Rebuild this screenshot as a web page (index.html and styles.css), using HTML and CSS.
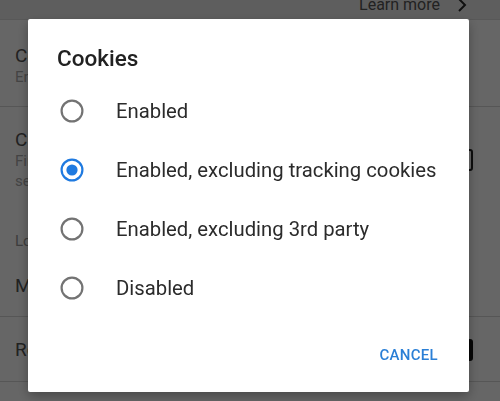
FILE: index.html
```html
<!DOCTYPE html>
<html>
<head>
<meta charset="utf-8">
<link rel="stylesheet" href="styles.css">
</head>
<body>
<div class="page">
  <div class="top-row">
    <span class="learn">Learn more</span>
    <svg class="chev" width="12" height="14" viewBox="0 0 12 14"><path d="M3 1 L9 7 L3 13" fill="none" stroke="#2a2a2a" stroke-width="2"/></svg>
  </div>
  <div class="row r1">
    <div class="row-text">
      <div class="row-title">Cookies</div>
      <div class="row-sub">Enabled, excluding tracking cookies</div>
    </div>
  </div>
  <div class="row r2">
    <div class="row-text">
      <div class="row-title">Cryptominers</div>
      <div class="row-sub">First-party and third-party trackers that<br>send data about you</div>
    </div>
    <span class="check"></span>
  </div>
  <div class="section">Logins and passwords</div>
  <div class="row r3">
    <div class="row-text"><div class="row-title">Manage logins</div></div>
  </div>
  <div class="row r4">
    <div class="row-text"><div class="row-title">Remember passwords</div></div>
    <span class="check on"></span>
  </div>
</div>

<div class="scrim">
  <div class="dialog">
    <div class="dlg-title">Cookies</div>
    <div class="options">
      <div class="option">
        <svg class="radio" width="24" height="24" viewBox="0 0 24 24"><circle cx="12" cy="12" r="10.4" fill="none" stroke="#737373" stroke-width="2.2"/></svg>
        <span class="opt-label">Enabled</span>
      </div>
      <div class="option">
        <svg class="radio" width="24" height="24" viewBox="0 0 24 24"><circle cx="12" cy="12" r="10.4" fill="none" stroke="#1f7ae0" stroke-width="2.2"/><circle cx="12" cy="12" r="5.6" fill="#1f7ae0"/></svg>
        <span class="opt-label">Enabled, excluding tracking cookies</span>
      </div>
      <div class="option">
        <svg class="radio" width="24" height="24" viewBox="0 0 24 24"><circle cx="12" cy="12" r="10.4" fill="none" stroke="#737373" stroke-width="2.2"/></svg>
        <span class="opt-label">Enabled, excluding 3rd party</span>
      </div>
      <div class="option">
        <svg class="radio" width="24" height="24" viewBox="0 0 24 24"><circle cx="12" cy="12" r="10.4" fill="none" stroke="#737373" stroke-width="2.2"/></svg>
        <span class="opt-label">Disabled</span>
      </div>
    </div>
    <div class="actions">
      <span class="btn">CANCEL</span>
    </div>
  </div>
</div>
</body>
</html>
```
FILE: styles.css
```css
* { box-sizing: border-box; }
html, body { margin: 0; padding: 0; }
body {
  width: 500px;
  height: 401px;
  overflow: hidden;
  font-family: Roboto, "Noto Sans", sans-serif;
  background: #ffffff;
}
.page {
  width: 500px;
  height: 401px;
  background: #ffffff;
  overflow: hidden;
}
.top-row {
  height: 20px;
  background: #ececec;
  border-bottom: 1px solid #dcdcdc;
  display: flex;
  justify-content: flex-end;
  align-items: flex-start;
  padding: 0 32px 0 0;
  gap: 16px;
  overflow: hidden;
}
.learn {
  font-size: 16px;
  line-height: 20px;
  color: #555;
  margin-top: -5px;
}
.chev { margin-top: -2px; }
.row {
  display: flex;
  align-items: center;
  padding: 0 27px 0 15px;
  border-bottom: 1px solid #d8d8d8;
}
.row-text { flex: 1; }
.row-title {
  font-size: 19px;
  line-height: 22px;
  color: #555;
}
.row-sub {
  font-size: 15px;
  line-height: 20px;
  color: #aaa;
}
.r1 { padding-top: 25px; padding-bottom: 19px; }
.r2 { padding-top: 22px; padding-bottom: 20px; border-bottom: none; }
.section {
  padding: 20px 15px 0;
  font-size: 15px;
  line-height: 20px;
  color: #999;
}
.r3 { padding-top: 24px; padding-bottom: 19px; }
.r4 { padding-top: 22px; padding-bottom: 20px; }
.check {
  width: 22px;
  height: 22px;
  border: 2px solid #222;
  border-radius: 3px;
}
.check.on { background: #111; border-color: #111; }

.scrim {
  position: fixed;
  inset: 0;
  background: rgba(0, 0, 0, 0.6);
  display: flex;
  align-items: flex-start;
  padding: 19px 0 0 28px;
}
.dialog {
  width: 441px;
  height: 373px;
  background: #ffffff;
  border-radius: 2px;
  box-shadow: 0 4px 12px rgba(0,0,0,0.3);
  padding: 25px 0 0 0;
  display: flex;
  flex-direction: column;
}
.dlg-title {
  padding-left: 29px;
  font-size: 22.5px;
  line-height: 28px;
  font-weight: 500;
  color: #212121;
}
.options {
  margin-top: 9px;
  display: flex;
  flex-direction: column;
}
.option {
  height: 59px;
  display: flex;
  align-items: center;
  padding-left: 32px;
  gap: 32px;
}
.radio { flex: none; }
.opt-label {
  font-size: 20.3px;
  color: #2b2b2b;
}
.actions {
  margin-top: 20px;
  display: flex;
  justify-content: flex-end;
  padding-right: 23px;
}
.btn {
  height: 36px;
  line-height: 36px;
  padding: 0 8px;
  font-size: 15px;
  font-weight: 500;
  letter-spacing: 0.3px;
  color: #2a7fd6;
}
```
